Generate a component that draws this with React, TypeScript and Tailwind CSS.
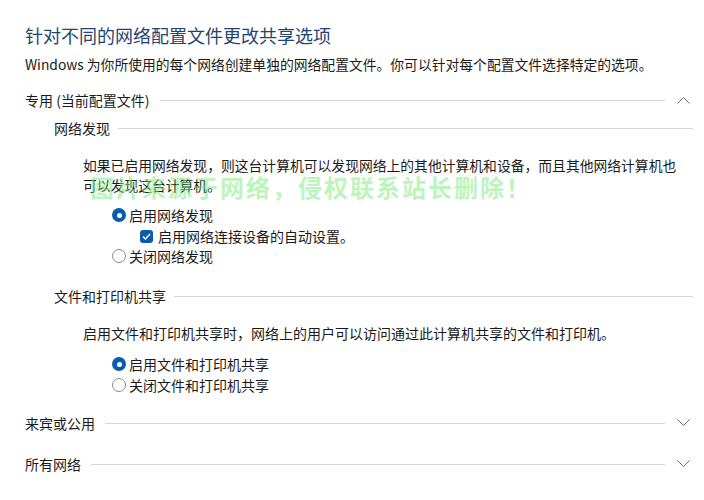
import React from 'react';

const font = { fontFamily: '"Noto Sans CJK SC", "Noto Sans", sans-serif' };

const Chevron = ({ up }: { up?: boolean }) => (
  <div className="w-[28px] flex justify-center">
    <svg width="13" height="8" viewBox="0 0 13 8" fill="none">
      {up ? (
        <path d="M0.5 7.5 L6.5 1.5 L12.5 7.5" stroke="#6b6b6b" strokeWidth="1" />
      ) : (
        <path d="M0.5 0.5 L6.5 6.5 L12.5 0.5" stroke="#6b6b6b" strokeWidth="1" />
      )}
    </svg>
  </div>
);

const SectionHeader = ({ title, up, className = '' }: { title: string; up?: boolean; className?: string }) => (
  <div className={`flex items-center h-[20px] ${className}`}>
    <span className="text-[14px] leading-[20px] whitespace-nowrap">{title}</span>
    <div className="flex-1 h-px bg-[#d6d6d6] ml-[10px] mr-[4px]" />
    <Chevron up={up} />
  </div>
);

const SubHeader = ({ title, className = '' }: { title: string; className?: string }) => (
  <div className={`flex items-center h-[20px] pl-[29px] pr-[4px] ${className}`}>
    <span className="text-[14px] leading-[20px] whitespace-nowrap">{title}</span>
    <div className="flex-1 h-px bg-[#d6d6d6] ml-[8px]" />
  </div>
);

const Radio = ({ label, checked, className = '' }: { label: string; checked?: boolean; className?: string }) => (
  <div className={`flex items-center h-[20px] pl-[87px] ${className}`}>
    {checked ? (
      <span className="w-[14px] h-[14px] rounded-full bg-[#0b5cab] flex items-center justify-center">
        <span className="w-[5px] h-[5px] rounded-full bg-white" />
      </span>
    ) : (
      <span className="w-[14px] h-[14px] rounded-full border border-[#8a8a8a] bg-white" />
    )}
    <span className="ml-[3px] text-[14px] leading-[20px] whitespace-nowrap">{label}</span>
  </div>
);

const Checkbox = ({ label, className = '' }: { label: string; className?: string }) => (
  <div className={`flex items-center h-[20px] pl-[115px] ${className}`}>
    <span className="w-[13px] h-[13px] rounded-[3px] bg-[#0b5cab] flex items-center justify-center">
      <svg width="9" height="7" viewBox="0 0 9 7" fill="none">
        <path d="M1 3.6 L3.4 6 L8 1" stroke="white" strokeWidth="1.4" />
      </svg>
    </span>
    <span className="ml-[5px] text-[14px] leading-[20px] whitespace-nowrap">{label}</span>
  </div>
);

export default function App() {
  return (
    <div className="relative w-[704px] h-[500px] bg-white text-[#1a1a1a] overflow-hidden" style={font}>
      <div className="pl-[25px] pr-[7px] pt-[23px]">
        <h1 className="text-[18px] leading-[24px] text-[#1f4470] whitespace-nowrap">针对不同的网络配置文件更改共享选项</h1>
        <p className="mt-[7px] text-[13.8px] leading-[20px] whitespace-nowrap">
          Windows 为你所使用的每个网络创建单独的网络配置文件。你可以针对每个配置文件选择特定的选项。
        </p>

        <SectionHeader title="专用 (当前配置文件)" up className="mt-[16px]" />

        <SubHeader title="网络发现" className="mt-[8px]" />
        <p className="mt-[17px] pl-[58px] text-[13.8px] leading-[20px] whitespace-nowrap">
          如果已启用网络发现，则这台计算机可以发现网络上的其他计算机和设备，而且其他网络计算机也
          <br />
          可以发现这台计算机。
        </p>
        <Radio label="启用网络发现" checked className="mt-[10px]" />
        <Checkbox label="启用网络连接设备的自动设置。" className="mt-[1px]" />
        <Radio label="关闭网络发现" />

        <SubHeader title="文件和打印机共享" className="mt-[20px]" />
        <p className="mt-[17px] pl-[58px] text-[14px] leading-[20px] whitespace-nowrap">
          启用文件和打印机共享时，网络上的用户可以访问通过此计算机共享的文件和打印机。
        </p>
        <Radio label="启用文件和打印机共享" checked className="mt-[11px]" />
        <Radio label="关闭文件和打印机共享" className="mt-[1px]" />

        <SectionHeader title="来宾或公用" className="mt-[18px]" />
        <SectionHeader title="所有网络" className="mt-[21px]" />
      </div>

      <div className="absolute left-[90px] top-[173px] text-[24px] leading-[28px] font-bold tracking-[2px] text-[rgba(120,235,120,0.5)] whitespace-nowrap pointer-events-none">
        图片来源于网络，侵权联系站长删除！
      </div>
    </div>
  );
}
